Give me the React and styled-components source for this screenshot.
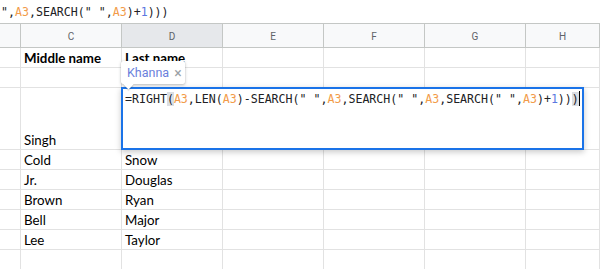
import React from "react";
import styled, { createGlobalStyle, css } from "styled-components";

const GlobalStyle = createGlobalStyle`
  html, body { margin: 0; padding: 0; background: #ffffff; overflow: hidden; }
  * { box-sizing: border-box; }
`;

const MONO = `"DejaVu Sans Mono", "Liberation Mono", monospace`;
const CELL_FONT = `Lato, "Open Sans", "Liberation Sans", sans-serif`;

const Page = styled.div`
  width: 600px;
  height: 269px;
  overflow: hidden;
  position: relative;
  background: #fff;
`;

const FormulaBar = styled.div`
  height: 23px;
  display: flex;
  align-items: flex-start;
  padding-top: 5px;
  padding-left: 1px;
  white-space: pre;
  font-family: ${MONO};
  font-size: 11.6px;
  line-height: 14px;
  color: #202124;
`;

const Tok = styled.span`
  ${(p) => p.$kind === "ref" && css`color: #f29b49;`}
  ${(p) => p.$kind === "num" && css`color: #5a78e0;`}
  ${(p) => p.$kind === "match" && css`background: #dcdee2;`}
`;

const Grid = styled.div`
  display: grid;
  grid-template-columns: 21px repeat(5, 101px) 1fr;
  grid-template-rows: 25px 20px 20px 62px repeat(6, 20px);
`;

const HeadCell = styled.div`
  border-top: 1px solid #c4c7c5;
  border-bottom: 1px solid #c4c7c5;
  border-right: 1px solid #c4c7c5;
  background: ${(p) => (p.$active ? "#e6e8eb" : "#f8f9fa")};
  display: flex;
  align-items: center;
  justify-content: center;
  font-family: Roboto, "Liberation Sans", sans-serif;
  font-size: 10px;
  color: #5f6368;
  padding-top: 1px;
`;

const Cell = styled.div`
  position: relative;
  border-right: 1px solid #e2e2e2;
  border-bottom: 1px solid #e2e2e2;
  display: flex;
  align-items: flex-end;
  padding: 0 3px 1px 3px;
  font-family: ${CELL_FONT};
  font-size: 13.3px;
  line-height: 15px;
  font-weight: ${(p) => (p.$bold ? 700 : 400)};
  color: #000;
  white-space: nowrap;
  overflow: ${(p) => (p.$overlay ? "visible" : "hidden")};
  z-index: ${(p) => (p.$overlay ? 2 : "auto")};
`;

const Editor = styled.div`
  position: absolute;
  left: -1px;
  top: -1px;
  width: 463px;
  height: 63px;
  border: 2px solid #1a73e8;
  background: #fff;
  box-shadow: 0 2px 6px rgba(0, 0, 0, 0.22);
  padding: 3px 0 0 2px;
  font-family: ${MONO};
  font-size: 11.6px;
  line-height: 14px;
  font-weight: 400;
  color: #202124;
  white-space: pre;
  display: flex;
  align-items: flex-start;
`;

const Caret = styled.span`
  display: inline-block;
  width: 1px;
  height: 15px;
  background: #000;
  margin-top: -1px;
`;

const Chip = styled.div`
  position: absolute;
  left: -1px;
  top: -27px;
  width: 64px;
  height: 23px;
  background: #fff;
  border-radius: 2px;
  box-shadow: 0 1px 3px rgba(60, 64, 67, 0.35), 0 0 1px rgba(60, 64, 67, 0.2);
  display: flex;
  align-items: center;
  gap: 5px;
  padding: 0 0 0 6px;
  font-family: Roboto, "Liberation Sans", sans-serif;
  font-size: 12.5px;
  font-weight: 400;
  z-index: 3;

  &::after {
    content: "";
    position: absolute;
    left: 4px;
    bottom: -4px;
    width: 7px;
    height: 7px;
    background: #fff;
    transform: rotate(45deg);
    box-shadow: 1px 1px 1px rgba(60, 64, 67, 0.25);
  }
`;

const ChipName = styled.span`
  color: #6a7fdc;
`;

const ChipClose = styled.span`
  color: #9aa0a6;
  font-size: 14px;
  line-height: 1;
`;

const COLS = ["", "C", "D", "E", "F", "G", "H"];

const rows = [
  { c: "Middle name", d: "Last name", bold: true },
  { c: "", d: "" },
  { c: "Singh", editor: true },
  { c: "Cold", d: "Snow" },
  { c: "Jr.", d: "Douglas" },
  { c: "Brown", d: "Ryan" },
  { c: "Bell", d: "Major" },
  { c: "Lee", d: "Taylor" },
  { c: "", d: "" },
];

function FormulaTokens() {
  return (
    <>
      =RIGHT<Tok $kind="match">(</Tok>
      <Tok $kind="ref">A3</Tok>,LEN(<Tok $kind="ref">A3</Tok>)-SEARCH(" ",
      <Tok $kind="ref">A3</Tok>,SEARCH(" ",<Tok $kind="ref">A3</Tok>,SEARCH(" ",
      <Tok $kind="ref">A3</Tok>)+<Tok $kind="num">1</Tok>))
      <Tok $kind="match">)</Tok>
    </>
  );
}

export default function App() {
  return (
    <Page>
      <GlobalStyle />
      <FormulaBar>
        <span>
          ",<Tok $kind="ref">A3</Tok>,SEARCH(" ",<Tok $kind="ref">A3</Tok>)+
          <Tok $kind="num">1</Tok>)))
        </span>
      </FormulaBar>
      <Grid>
        {COLS.map((c, i) => (
          <HeadCell key={"h" + i} $active={c === "D"}>
            {c}
          </HeadCell>
        ))}
        {rows.map((r, ri) => (
          <React.Fragment key={ri}>
            <Cell />
            <Cell $bold={r.bold}>{r.c}</Cell>
            {r.editor ? (
              <Cell $overlay>
                <Chip>
                  <ChipName>Khanna</ChipName>
                  <ChipClose>×</ChipClose>
                </Chip>
                <Editor>
                  <span>
                    <FormulaTokens />
                  </span>
                  <Caret />
                </Editor>
              </Cell>
            ) : (
              <Cell $bold={r.bold}>{r.d}</Cell>
            )}
            <Cell />
            <Cell />
            <Cell />
            <Cell />
          </React.Fragment>
        ))}
      </Grid>
    </Page>
  );
}
